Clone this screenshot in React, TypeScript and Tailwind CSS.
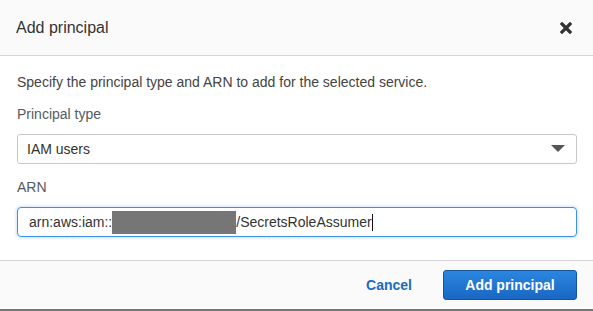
import React from 'react';

const App: React.FC = () => {
  return (
    <div className="w-[593px] h-[311px] bg-white font-['Liberation_Sans',Arial,sans-serif] flex flex-col">
      <div className="h-[56px] shrink-0 bg-[#fafafa] border-b border-[#d5d5d5] flex items-center justify-between pl-[16px] pr-[21px]">
        <h2 className="text-[16px] text-[#333] leading-none">Add principal</h2>
        <svg width="12" height="12" viewBox="0 0 12 12" className="mt-[1px]">
          <path d="M2 2 L10 10 M10 2 L2 10" stroke="#333" strokeWidth="3.2" strokeLinecap="square" />
        </svg>
      </div>
      <div className="flex-1 px-[17px] pt-[17px]">
        <p className="text-[14px] text-[#444] leading-[18px]">
          Specify the principal type and ARN to add for the selected service.
        </p>
        <div className="mt-[14px] text-[14px] text-[#545b64] leading-[18px]">Principal type</div>
        <div className="mt-[11px] h-[30px] w-[560px] border border-[#c8c8c8] rounded-[3px] flex items-center justify-between pl-[9px] pr-[11px]">
          <span className="text-[14px] text-[#333]">IAM users</span>
          <svg width="14" height="8" viewBox="0 0 14 8">
            <path d="M0 0 H14 L7 7 Z" fill="#555" />
          </svg>
        </div>
        <div className="mt-[14px] text-[14px] text-[#545b64] leading-[18px]">ARN</div>
        <div className="mt-[11px] h-[30px] w-[560px] border border-[#3b8ff0] rounded-[4px] shadow-[0_0_3px_1px_rgba(59,143,240,0.25)] flex items-center pl-[11px]">
          <span className="text-[14px] text-[#333]">arn:aws:iam::</span>
          <span className="inline-block w-[124px] h-[23px] bg-[#767676]"></span>
          <span className="text-[14px] text-[#333]">/SecretsRoleAssumer</span>
          <span className="inline-block w-[1px] h-[17px] bg-[#111]"></span>
        </div>
      </div>
      <div className="h-[51px] shrink-0 bg-[#fafafa] border-t border-[#d5d5d5] border-b-2 border-b-[#777] flex items-center justify-end pr-[16px]">
        <button className="text-[14px] font-bold text-[#1c6bbf] mr-[31px]">Cancel</button>
        <button className="h-[30px] w-[134px] rounded-[3px] border border-[#15549b] bg-gradient-to-b from-[#2b86e0] to-[#1867c3] text-white text-[14px] font-bold">
          Add principal
        </button>
      </div>
    </div>
  );
};

export default App;
